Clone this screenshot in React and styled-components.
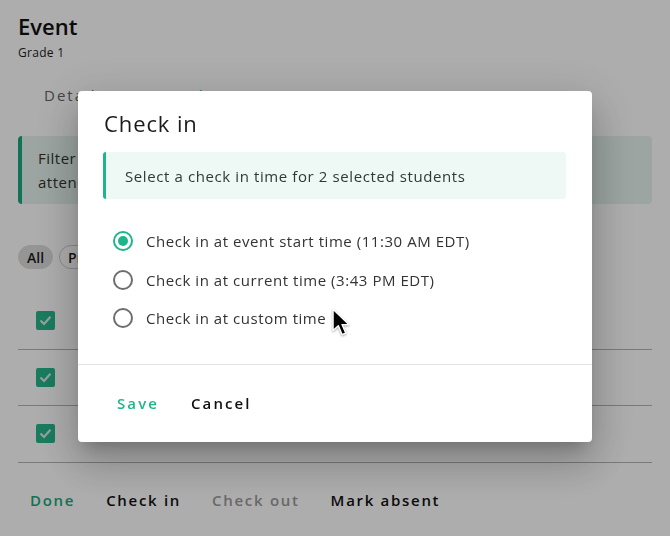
import React from "react";
import styled, { createGlobalStyle } from "styled-components";

const Global = createGlobalStyle`
  html, body { margin: 0; padding: 0; background: #fff; }
  body { font-family: "Open Sans", "Liberation Sans", sans-serif; color: #1d1d1d; }
  * { box-sizing: border-box; }
`;

const Page = styled.div`
  width: 670px;
  height: 536px;
  overflow: hidden;
  display: flex;
  flex-direction: column;
`;

const Header = styled.header`
  padding: 12px 18px 0;
`;

const Title = styled.h1`
  margin: 0;
  font-size: 22px;
  font-weight: 600;
  line-height: 28px;
  color: #111;
`;

const Sub = styled.div`
  font-size: 12px;
  font-weight: 500;
  letter-spacing: 0.3px;
  margin-top: 4px;
`;

const Tabs = styled.nav`
  display: flex;
  gap: 40px;
  padding: 24px 44px 0;
`;

const Tab = styled.span`
  font-size: 15px;
  font-weight: 500;
  letter-spacing: 2px;
  color: ${(p) => (p.$active ? "#1aa97e" : "#666")};
`;

const Banner = styled.div`
  margin: 31px 18px 0;
  height: 68px;
  border-left: 4px solid #1aa97e;
  border-radius: 4px;
  background: #e6f3ee;
  padding: 10px 0 0 16px;
  font-size: 15px;
  font-weight: 500;
  letter-spacing: 0.5px;
  line-height: 24px;
  color: #333;
`;

const Chips = styled.div`
  display: flex;
  gap: 6px;
  padding: 41px 18px 0;
`;

const Chip = styled.span`
  height: 24px;
  border-radius: 12px;
  padding: 0 8px;
  display: inline-flex;
  align-items: center;
  font-size: 14px;
  font-weight: 600;
  background: ${(p) => (p.$on ? "#dcdcdc" : "#fff")};
  border: 1px solid ${(p) => (p.$on ? "#dcdcdc" : "#ccc")};
`;

const Rows = styled.div`
  margin: 24px 18px 0;
`;

const Row = styled.div`
  height: 56.5px;
  display: flex;
  align-items: center;
  padding-left: 18px;
  border-bottom: 1px solid #b4b4b4;
`;

const Check = styled.span`
  width: 19px;
  height: 19px;
  border-radius: 2px;
  background: #26b68b;
  display: inline-flex;
  align-items: center;
  justify-content: center;
`;

const BottomBar = styled.div`
  display: flex;
  gap: 31px;
  padding: 27px 30px 0;
`;

const BarBtn = styled.span`
  font-size: 15px;
  font-weight: 600;
  letter-spacing: 1.7px;
  color: ${(p) => p.$color || "#111"};
`;

const Overlay = styled.div`
  position: fixed;
  inset: 0;
  background: rgba(0, 0, 0, 0.32);
  display: flex;
  align-items: center;
  justify-content: center;
  padding-bottom: 3px;
`;

const Dialog = styled.div`
  position: relative;
  width: 514px;
  height: 351px;
  background: #fff;
  border-radius: 4px;
  box-shadow: 0 11px 15px -7px rgba(0,0,0,0.2), 0 24px 38px 3px rgba(0,0,0,0.14), 0 9px 46px 8px rgba(0,0,0,0.12);
  display: flex;
  flex-direction: column;
`;

const DialogBody = styled.div`
  padding: 18px 26px 0 25px;
  flex: 1;
`;

const DialogTitle = styled.h2`
  margin: 0 0 1px 1px;
  font-size: 22px;
  font-weight: 500;
  letter-spacing: 0.9px;
  line-height: 28px;
  color: #1b1b1b;
`;

const Info = styled.div`
  margin-top: 15px;
  height: 47px;
  border-left: 3px solid #1fb58a;
  border-radius: 3px;
  background: #eef8f4;
  display: flex;
  align-items: center;
  padding-left: 19px;
  font-size: 15px;
  font-weight: 500;
  letter-spacing: 0.6px;
  color: #2f3a36;
`;

const Options = styled.div`
  margin-top: 32px;
  display: flex;
  flex-direction: column;
  gap: 18.5px;
  padding-left: 10px;
`;

const Option = styled.label`
  display: flex;
  align-items: center;
  gap: 13px;
  font-size: 15px;
  letter-spacing: 0.55px;
  color: #333;
  height: 20px;
`;

const Radio = styled.span`
  width: 20px;
  height: 20px;
  border-radius: 50%;
  border: 2px solid ${(p) => (p.$on ? "#1fb58a" : "#6e6e6e")};
  display: inline-flex;
  align-items: center;
  justify-content: center;
  flex: none;
  &::after {
    content: "";
    width: 10px;
    height: 10px;
    border-radius: 50%;
    background: ${(p) => (p.$on ? "#1fb58a" : "transparent")};
  }
`;

const Footer = styled.div`
  border-top: 1px solid #e4e4e4;
  height: 78px;
  display: flex;
  align-items: center;
  gap: 32px;
  padding: 0 0 2px 39px;
`;

const DlgBtn = styled.span`
  font-size: 15px;
  font-weight: 600;
  letter-spacing: 2.1px;
  color: ${(p) => p.$color || "#111"};
`;

const Pointer = styled.svg`
  position: absolute;
  left: 254px;
  top: 217px;
  filter: drop-shadow(0 1px 1px rgba(0,0,0,0.35));
`;

const Tick = () => (
  <svg width="13" height="11" viewBox="0 0 13 11">
    <path d="M1.5 5.5 L5 9 L11.5 1.8" fill="none" stroke="#d9efe7" strokeWidth="2.2" />
  </svg>
);

export default function App() {
  return (
    <Page>
      <Global />
      <Header>
        <Title>Event</Title>
        <Sub>Grade 1</Sub>
      </Header>
      <Tabs>
        <Tab>Details</Tab>
        <Tab $active>Attendance</Tab>
      </Tabs>
      <Banner>
        Filter students by status
        <br />
        attendance
      </Banner>
      <Chips>
        <Chip $on>All</Chip>
        <Chip>Present</Chip>
      </Chips>
      <Rows>
        {[0, 1, 2].map((i) => (
          <Row key={i}>
            <Check>
              <Tick />
            </Check>
          </Row>
        ))}
      </Rows>
      <BottomBar>
        <BarBtn $color="#1aa97e">Done</BarBtn>
        <BarBtn>Check in</BarBtn>
        <BarBtn $color="#9a9a9a">Check out</BarBtn>
        <BarBtn>Mark absent</BarBtn>
      </BottomBar>

      <Overlay>
        <Dialog>
          <DialogBody>
            <DialogTitle>Check in</DialogTitle>
            <Info>Select a check in time for 2 selected students</Info>
            <Options>
              <Option>
                <Radio $on />
                Check in at event start time (11:30 AM EDT)
              </Option>
              <Option>
                <Radio />
                Check in at current time (3:43 PM EDT)
              </Option>
              <Option>
                <Radio />
                Check in at custom time
              </Option>
            </Options>
          </DialogBody>
          <Footer>
            <DlgBtn $color="#1fb58a">Save</DlgBtn>
            <DlgBtn>Cancel</DlgBtn>
          </Footer>
          <Pointer width="19" height="30" viewBox="0 0 18 28">
            <path d="M1 1 L1 21 L6 16.5 L9.5 25 L13 23.5 L9.5 15.5 L16 15.5 Z" fill="#000" stroke="#fff" strokeWidth="1.3" strokeLinejoin="round" />
          </Pointer>
        </Dialog>
      </Overlay>
    </Page>
  );
}
